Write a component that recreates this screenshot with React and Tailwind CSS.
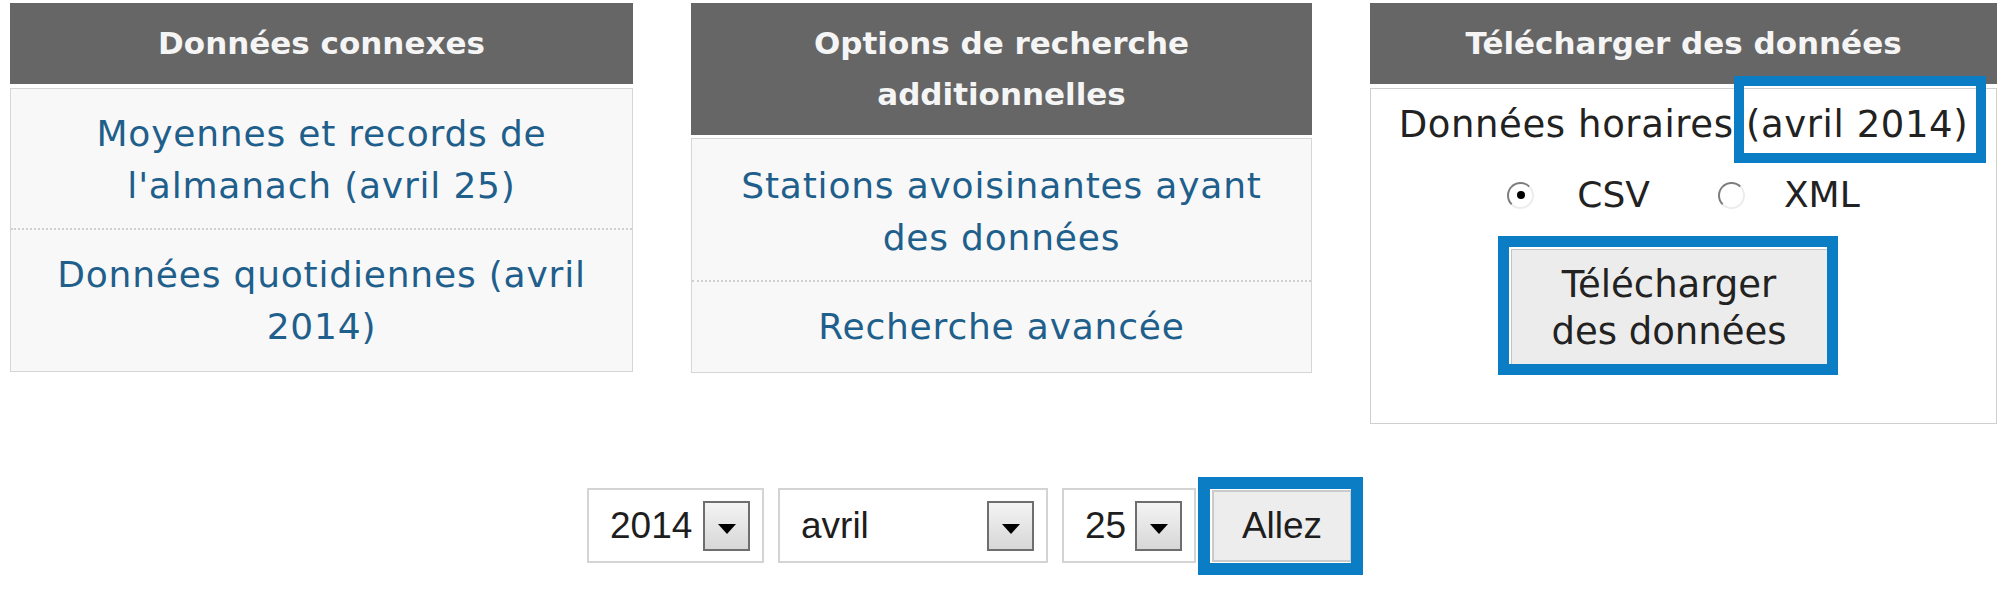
import React from "react";

const FONT = { fontFamily: '"DejaVu Sans", Verdana, sans-serif' };
const SANS = { fontFamily: '"Liberation Sans", Arial, sans-serif' };

function Header({ children }) {
  return (
    <div className="bg-[#666666] text-[#f5f5f5] font-bold text-[31px] leading-[51px] py-[15px] text-center px-[20px]">
      {children}
    </div>
  );
}

function LinkItem({ children, last, extraPb }) {
  return (
    <div
      className={
        "pt-[19px] text-center text-[#1f5f8c] text-[36px] leading-[52px] tracking-[0.8px] px-[20px] " +
        (last ? "" : "border-b-2 border-dotted border-[#d0d0d0] ") +
        (extraPb ? "pb-[18px]" : "pb-[16px]")
      }
    >
      {children}
    </div>
  );
}

function Radio({ checked }) {
  return (
    <div className="w-[27px] h-[27px] rounded-full border-2 border-t-[#7d7d7d] border-l-[#7d7d7d] border-b-[#ececec] border-r-[#ececec] bg-white flex items-center justify-center">
      {checked && <div className="w-[8px] h-[8px] rounded-full bg-black" />}
    </div>
  );
}

function Arrow() {
  return (
    <div className="w-[47px] h-[50px] border-2 border-[#6e6e6e] bg-gradient-to-b from-[#f4f4f4] to-[#d7d7d7] flex items-center justify-center pt-[6px]">
      <svg width="18" height="10" viewBox="0 0 18 10">
        <polygon points="0,0 18,0 9,10" fill="#000" />
      </svg>
    </div>
  );
}

function Select({ value, widthClass }) {
  return (
    <div
      className={
        "h-[75px] border-2 border-[#d4d4d4] bg-white flex items-center justify-between pl-[21px] pr-[12px] " +
        widthClass
      }
    >
      <span className="text-[37px] leading-none text-[#1e1e1e]" style={SANS}>
        {value}
      </span>
      <Arrow />
    </div>
  );
}

export default function App() {
  return (
    <div className="w-[2000px] h-[595px] bg-white overflow-hidden" style={FONT}>
      <div className="flex items-start gap-[58px] pl-[10px] pt-[3px]">
        {/* Panel 1 */}
        <div className="w-[623px]">
          <Header>Données connexes</Header>
          <div className="mt-[4px] border border-[#d6d6d6] bg-[#f8f8f8]">
            <LinkItem>
              Moyennes et records de l'almanach (avril 25)
            </LinkItem>
            <LinkItem last extraPb>
              Données quotidiennes (avril 2014)
            </LinkItem>
          </div>
        </div>

        {/* Panel 2 */}
        <div className="w-[621px]">
          <Header>
            Options de recherche
            <br />
            additionnelles
          </Header>
          <div className="mt-[3px] border border-[#d6d6d6] bg-[#f8f8f8]">
            <div className="pt-[21px] pb-[16px] text-center text-[#1f5f8c] text-[36px] leading-[52px] tracking-[0.8px] px-[20px] border-b-2 border-dotted border-[#d0d0d0]">
              Stations avoisinantes ayant
              <br />
              des données
            </div>
            <div className="pt-[19px] pb-[19px] text-center text-[#1f5f8c] text-[36px] leading-[52px] tracking-[0.8px] px-[20px]">
              Recherche avancée
            </div>
          </div>
        </div>

        {/* Panel 3 */}
        <div className="w-[627px]">
          <Header>Télécharger des données</Header>
          <div className="mt-[4px] border border-[#cfcfcf] bg-white pt-[9px] pb-[57px] text-[#222]">
            <div className="text-center text-[37px] leading-[54px] tracking-[0.6px]">
              Données horaires{" "}
              <span className="relative">
                (avril 2014)
                <span className="absolute -left-[12px] -right-[18px] -top-[27px] -bottom-[17px] border-[10px] border-[#0b7dc4]" />
              </span>
            </div>
            <div className="mt-[16px] h-[54px] flex items-center justify-center text-[36px]">
              <Radio checked />
              <span className="ml-[43px]">CSV</span>
              <span className="ml-[68px]">
                <Radio />
              </span>
              <span className="ml-[39px]">XML</span>
            </div>
            <div className="mt-[27px] flex justify-center">
              <div className="relative mr-[29px]">
                <div className="w-[317px] h-[117px] border border-[#c4c4c4] bg-[#ececec] flex items-center justify-center text-center text-[37px] leading-[47px] text-[#222]">
                  Télécharger
                  <br />
                  des données
                </div>
                <span className="absolute -left-[13px] -right-[10px] -top-[13px] -bottom-[9px] border-[11px] border-[#0b7dc4]" />
              </div>
            </div>
          </div>
        </div>
      </div>

      {/* Bottom row */}
      <div className="flex items-center pl-[587px] mt-[64px]">
        <Select value="2014" widthClass="w-[177px]" />
        <div className="ml-[14px]">
          <Select value="avril" widthClass="w-[270px]" />
        </div>
        <div className="ml-[14px]">
          <Select value="25" widthClass="w-[134px]" />
        </div>
        <div className="ml-[16px] relative">
          <div
            className="w-[140px] h-[72px] border-2 border-[#cacaca] bg-[#ededed] flex items-center justify-center text-[37px] text-[#1e1e1e]"
            style={SANS}
          >
            Allez
          </div>
          <span className="absolute -left-[14px] -right-[11px] -top-[13px] -bottom-[13px] border-[12px] border-[#0b7dc4]" />
        </div>
      </div>
    </div>
  );
}
